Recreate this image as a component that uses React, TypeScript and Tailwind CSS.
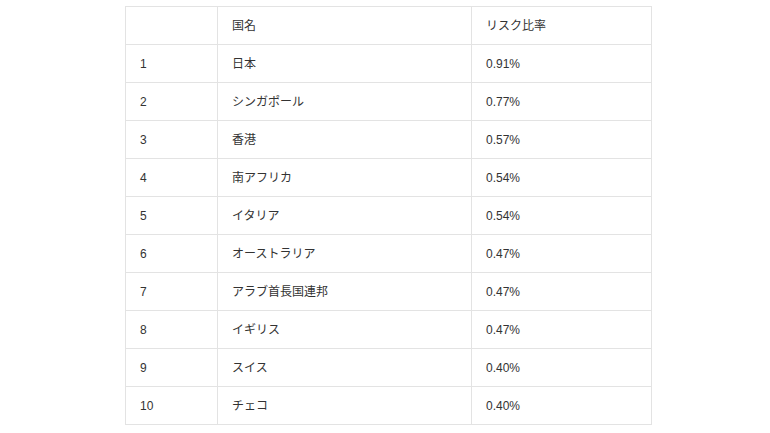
import * as React from "react";

const rows = [
  ["1", "日本", "0.91%"],
  ["2", "シンガポール", "0.77%"],
  ["3", "香港", "0.57%"],
  ["4", "南アフリカ", "0.54%"],
  ["5", "イタリア", "0.54%"],
  ["6", "オーストラリア", "0.47%"],
  ["7", "アラブ首長国連邦", "0.47%"],
  ["8", "イギリス", "0.47%"],
  ["9", "スイス", "0.40%"],
  ["10", "チェコ", "0.40%"],
];

const App: React.FC = () => {
  return (
    <div className="w-[770px] h-[433px] bg-white pt-[6px] pl-[125px] font-['Liberation_Sans','Noto_Sans_CJK_JP',sans-serif] text-[12px] text-[#333]">
      <table className="border-collapse table-fixed w-[526px]">
        <colgroup>
          <col className="w-[92px]" />
          <col className="w-[254px]" />
          <col className="w-[180px]" />
        </colgroup>
        <thead>
          <tr>
            <th className="h-[38px] border border-[#e3e3e3] px-[14px] pt-[1px] text-left font-normal"></th>
            <th className="h-[38px] border border-[#e3e3e3] px-[14px] text-left font-normal">国名</th>
            <th className="h-[38px] border border-[#e3e3e3] px-[14px] text-left font-normal">リスク比率</th>
          </tr>
        </thead>
        <tbody>
          {rows.map((r) => (
            <tr key={r[0]}>
              {r.map((c, i) => (
                <td key={i} className="h-[38px] border border-[#e3e3e3] px-[14px]">
                  {c}
                </td>
              ))}
            </tr>
          ))}
        </tbody>
      </table>
    </div>
  );
};

export default App;
